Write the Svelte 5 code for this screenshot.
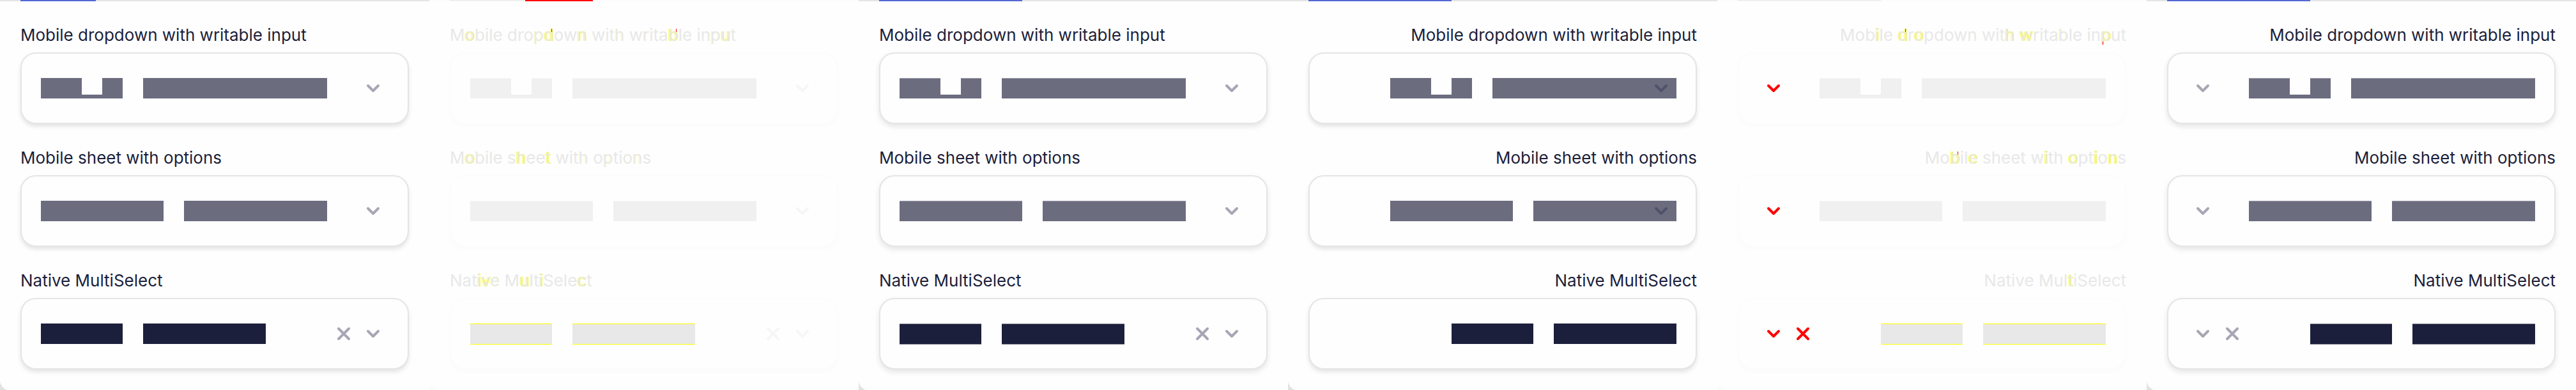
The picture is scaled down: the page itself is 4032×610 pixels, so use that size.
<script>
  const letters = (text, marks = {}) => [...text].map((char, i) => ({ char, mark: marks[i] ?? '' }));

  const titles = ['Mobile dropdown with writable input', 'Mobile sheet with options', 'Native MultiSelect'];
  const bars = [
    ['wide', 'notch', 'unit', 'gap', 'nine'],
    ['six', 'gap', 'seven'],
    ['four', 'gap', 'six']
  ];

  const ltrMarks = [
    { 1: 'edge', 10: 'faint', 11: 'edge hot', 14: 'edge', 19: 'faint', 22: 'faint', 26: 'edge hot', 32: 'faint', 33: 'edge' },
    { 1: 'edge', 8: 'edge', 11: 'edge', 16: 'faint', 19: 'faint', 23: 'faint' },
    { 3: 'edge', 4: 'edge', 5: 'faint', 8: 'edge', 11: 'edge', 16: 'edge' }
  ];
  const rtlMarks = [
    { 3: 'edge', 7: 'edge hot', 9: 'edge', 19: 'edge', 21: 'edge', 26: 'faint', 32: 'edge low' },
    { 2: 'edge hot', 5: 'edge', 14: 'edge', 18: 'edge', 21: 'edge', 23: 'edge' },
    { 10: 'edge' }
  ];

  const panels = [
    { kind: 'plain', dir: 'ltr', icons: 'right', tab: 'short' },
    { kind: 'diff', dir: 'ltr', icons: 'right', tab: 'short', marks: ltrMarks },
    { kind: 'plain soft', dir: 'ltr', icons: 'right', tab: 'long' },
    { kind: 'plain', dir: 'rtl', icons: 'over', tab: 'long' },
    { kind: 'diff changed', dir: 'rtl', icons: 'left', tab: 'long', marks: rtlMarks },
    { kind: 'plain soft', dir: 'rtl', icons: 'left', tab: 'long' }
  ];
</script>

<main class="board">
  {#each panels as panel, p}
    <section class="panel {panel.kind} {panel.dir}">
      <div class="tabs"><span class="tab {panel.tab}"></span>{#if p === 1}<span class="tab-change"></span>{/if}</div>
      <div class="fields">
        {#each titles as title, r}
          <div class="group">
            <label for="field-{p}-{r}">{#if panel.marks}{#each letters(title, panel.marks[r]) as l}{#if l.mark}<span class={l.mark}>{l.char}</span>{:else}{l.char}{/if}{/each}{:else}{title}{/if}</label>
            <div class="field" class:filled={r === 2}>
              {#if r === 0}
                <input id="field-{p}-{r}" class="control" type="text" />
              {:else}
                <button id="field-{p}-{r}" class="control" type="button"></button>
              {/if}
              <div class="bars">
                {#each bars[r] as bar}<span class={bar}></span>{/each}
              </div>
              <div class="icons {panel.icons}">
                {#if r === 2 && panel.icons !== 'over'}
                  <button type="button" class="icon" aria-label="Clear">
                    <svg viewBox="0 0 24 24"><path d="M4 4 20 20M20 4 4 20" /></svg>
                  </button>
                {/if}
                {#if !(r === 2 && panel.icons === 'over')}
                  <button type="button" class="icon" aria-label="Open">
                    <svg viewBox="0 0 24 24"><path d="M4 8 12 16 20 8" /></svg>
                  </button>
                {/if}
              </div>
            </div>
          </div>
        {/each}
      </div>
    </section>
  {/each}
</main>

<style>
  :global(body) { margin: 0; background: #fff; }
  .board {
    display: grid;
    grid-template-columns: repeat(6, 1fr);
    font-family: Inter, sans-serif;
  }
  .panel {
    --ink: #1c1f3b;
    --muted: #6c6c7f;
    --line: #e5e5e5;
    --icon: #a7a6b4;
    --page: #e2e2e2;
    --tab: #5468d4;
    background: radial-gradient(circle at 18px calc(100% - 17px), transparent 18px, var(--page) 19px) left bottom / 18px 17px no-repeat, #fefefe;
  }
  .diff {
    --ink: #e8e8e8;
    --muted: #f0f0f0;
    --line: #fcfcfc;
    --icon: #f6f6f6;
    --page: #fbfbfb;
    --tab: #f0f0f0;
  }
  .changed { --icon: #f00; }
  .tabs { display: flex; height: 2px; padding-left: 32px; background: var(--line); }
  .tab { background: var(--tab); }
  .short { width: 118px; }
  .long { width: 224px; }
  .tab-change { width: 106px; background: #f00; }
  .fields { display: flex; flex-direction: column; gap: 38px; padding: 38px 32px 32px; }
  .group { display: flex; flex-direction: column; gap: 12px; }
  label { font-size: 26px; line-height: 30px; color: var(--ink); white-space: nowrap; }
  .rtl label { text-align: right; }
  .edge { position: relative; text-shadow: 1px 0 #ffff40, -1px 0 #ffff40; }
  .faint { text-shadow: -1px 0 #ffffb0; }
  .hot::after, .low::after {
    content: '';
    position: absolute;
    right: 3px;
    top: 6px;
    width: 1px;
    height: 5px;
    background: #f00;
  }
  .low::after { top: auto; right: auto; left: 3px; bottom: 0; }
  .field {
    position: relative;
    display: flex;
    align-items: center;
    box-sizing: border-box;
    height: 112px;
    padding: 0 30px;
    border: 2px solid var(--line);
    border-radius: 24px;
    background: #fefefe;
    box-shadow: 0 4px 6px #0000001a;
  }
  .soft .field { box-shadow: 0 4px 8px #0000001a; }
  .diff .field { box-shadow: 0 4px 8px #00000004; }
  .rtl .field { justify-content: flex-end; }
  .control {
    position: absolute;
    inset: 0;
    width: 100%;
    padding: 0 30px;
    border: 0;
    border-radius: 22px;
    background: transparent;
  }
  .bars { display: flex; height: 32px; color: var(--muted); pointer-events: none; position: relative; }
  .filled .bars { color: var(--ink); }
  .bars span { box-sizing: border-box; background: currentColor; }
  .bars .gap { width: 32px; background: none; }
  .bars .notch { width: 32px; height: 6px; align-self: flex-end; }
  .unit { width: 32px; }
  .wide { width: 64px; }
  .four { width: 128px; }
  .six { width: 192px; }
  .seven { width: 224px; }
  .nine { width: 288px; }
  .soft .field:not(.filled) .bars span:not(.gap, .notch) { border-top: 1px solid #9c9cab; }
  .diff .field:not(.filled) .bars span:not(.gap, .notch) { border-top: 1px solid #f7f7f7; }
  .soft .filled .bars span:not(.gap) { height: 33px; border: solid #8d8f9d; border-width: 1px 0; }
  .diff .filled .bars span:not(.gap) { height: 33px; border: solid #ff0; border-width: 1px 0; }
  .icons {
    position: absolute;
    top: 0;
    bottom: 0;
    right: 42px;
    display: flex;
    align-items: center;
    gap: 22px;
    color: var(--icon);
  }
  .icons.left { right: auto; left: 42px; flex-direction: row-reverse; }
  .icons.over { color: #52516b; }
  .icon { display: flex; padding: 0; border: 0; background: none; color: inherit; }
  .icon svg { width: 24px; height: 24px; fill: none; stroke: currentColor; stroke-width: 4; stroke-linecap: round; stroke-linejoin: round; }
</style>
